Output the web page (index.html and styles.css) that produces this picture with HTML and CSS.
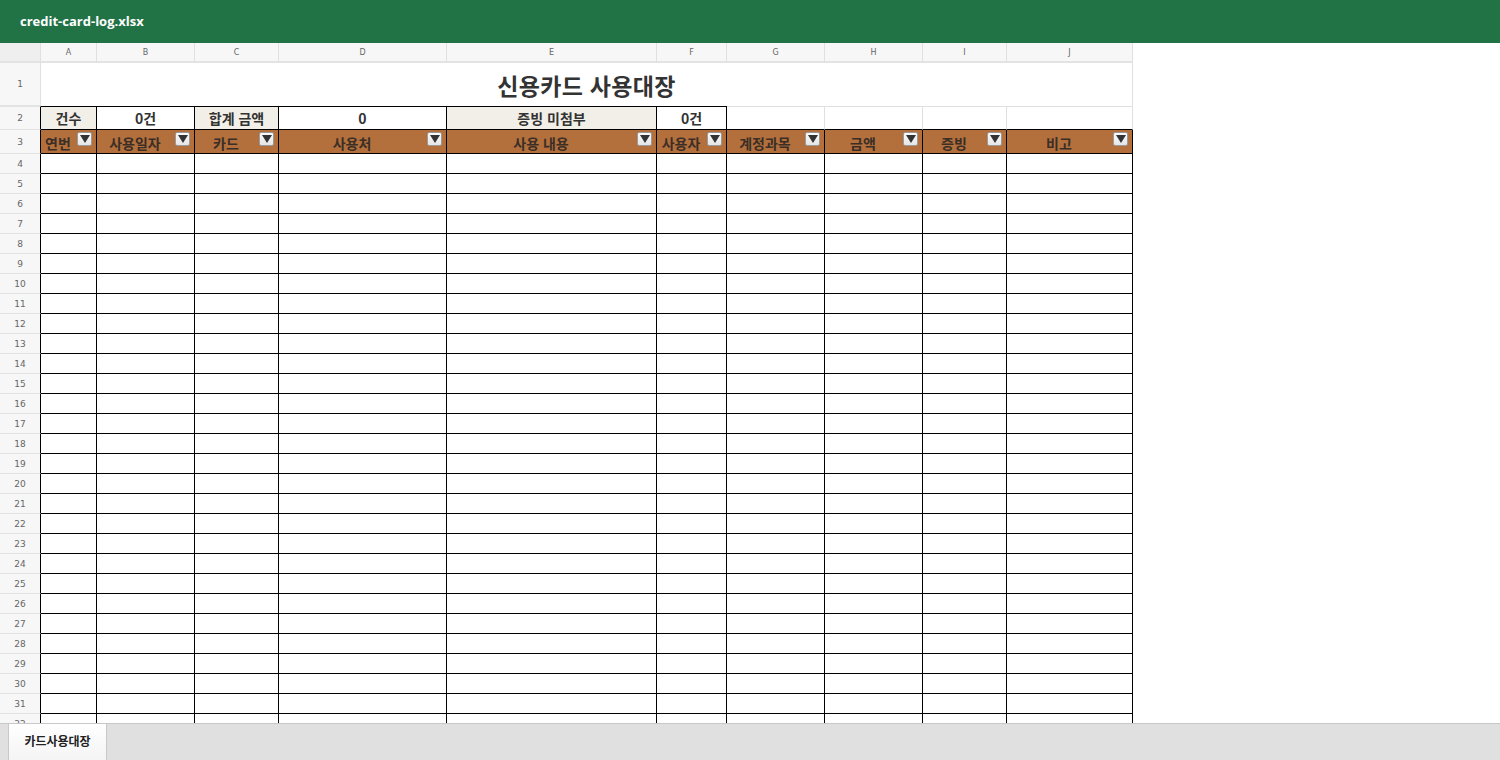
FILE: index.html
```html
<!DOCTYPE html>
<html lang="ko">
<head>
<meta charset="utf-8">
<title>credit-card-log.xlsx</title>
<link rel="stylesheet" href="styles.css">
</head>
<body>
<div class="app">
  <header class="titlebar">credit-card-log.xlsx</header>
  <main class="sheet">
    <table class="grid">
      <colgroup>
        <col class="c-rh"><col class="c-a"><col class="c-b"><col class="c-c"><col class="c-d"><col class="c-e"><col class="c-f"><col class="c-g"><col class="c-h"><col class="c-i"><col class="c-j">
      </colgroup>
      <thead>
        <tr class="r-colhdr">
          <th class="corner"></th><th>A</th><th>B</th><th>C</th><th>D</th><th>E</th><th>F</th><th>G</th><th>H</th><th>I</th><th>J</th>
        </tr>
      </thead>
      <tbody>
        <tr class="r-title">
          <td class="rh">1</td>
          <td class="title" colspan="10">신용카드 사용대장</td>
        </tr>
        <tr class="r-sum">
          <td class="rh rh-edge">2</td>
          <td class="sum lbl">건수</td>
          <td class="sum">0건</td>
          <td class="sum lbl">합계 금액</td>
          <td class="sum">0</td>
          <td class="sum lbl">증빙 미첨부</td>
          <td class="sum">0건</td>
          <td class="plain"></td><td class="plain"></td><td class="plain"></td><td class="plain"></td>
        </tr>
        <tr class="r-head">
          <td class="rh rh-edge">3</td>
          <td class="hd"><div class="fh"><span>연번</span><i class="fb"></i></div></td>
          <td class="hd"><div class="fh"><span>사용일자</span><i class="fb"></i></div></td>
          <td class="hd"><div class="fh"><span>카드</span><i class="fb"></i></div></td>
          <td class="hd"><div class="fh"><span>사용처</span><i class="fb"></i></div></td>
          <td class="hd"><div class="fh"><span>사용 내용</span><i class="fb"></i></div></td>
          <td class="hd"><div class="fh"><span>사용자</span><i class="fb"></i></div></td>
          <td class="hd"><div class="fh"><span>계정과목</span><i class="fb"></i></div></td>
          <td class="hd"><div class="fh"><span>금액</span><i class="fb"></i></div></td>
          <td class="hd"><div class="fh"><span>증빙</span><i class="fb"></i></div></td>
          <td class="hd"><div class="fh"><span>비고</span><i class="fb"></i></div></td>
        </tr>
        <tr class="r"><td class="rh rh-edge">4</td><td></td><td></td><td></td><td></td><td></td><td></td><td></td><td></td><td></td><td></td></tr>
        <tr class="r"><td class="rh rh-edge">5</td><td></td><td></td><td></td><td></td><td></td><td></td><td></td><td></td><td></td><td></td></tr>
        <tr class="r"><td class="rh rh-edge">6</td><td></td><td></td><td></td><td></td><td></td><td></td><td></td><td></td><td></td><td></td></tr>
        <tr class="r"><td class="rh rh-edge">7</td><td></td><td></td><td></td><td></td><td></td><td></td><td></td><td></td><td></td><td></td></tr>
        <tr class="r"><td class="rh rh-edge">8</td><td></td><td></td><td></td><td></td><td></td><td></td><td></td><td></td><td></td><td></td></tr>
        <tr class="r"><td class="rh rh-edge">9</td><td></td><td></td><td></td><td></td><td></td><td></td><td></td><td></td><td></td><td></td></tr>
        <tr class="r"><td class="rh rh-edge">10</td><td></td><td></td><td></td><td></td><td></td><td></td><td></td><td></td><td></td><td></td></tr>
        <tr class="r"><td class="rh rh-edge">11</td><td></td><td></td><td></td><td></td><td></td><td></td><td></td><td></td><td></td><td></td></tr>
        <tr class="r"><td class="rh rh-edge">12</td><td></td><td></td><td></td><td></td><td></td><td></td><td></td><td></td><td></td><td></td></tr>
        <tr class="r"><td class="rh rh-edge">13</td><td></td><td></td><td></td><td></td><td></td><td></td><td></td><td></td><td></td><td></td></tr>
        <tr class="r"><td class="rh rh-edge">14</td><td></td><td></td><td></td><td></td><td></td><td></td><td></td><td></td><td></td><td></td></tr>
        <tr class="r"><td class="rh rh-edge">15</td><td></td><td></td><td></td><td></td><td></td><td></td><td></td><td></td><td></td><td></td></tr>
        <tr class="r"><td class="rh rh-edge">16</td><td></td><td></td><td></td><td></td><td></td><td></td><td></td><td></td><td></td><td></td></tr>
        <tr class="r"><td class="rh rh-edge">17</td><td></td><td></td><td></td><td></td><td></td><td></td><td></td><td></td><td></td><td></td></tr>
        <tr class="r"><td class="rh rh-edge">18</td><td></td><td></td><td></td><td></td><td></td><td></td><td></td><td></td><td></td><td></td></tr>
        <tr class="r"><td class="rh rh-edge">19</td><td></td><td></td><td></td><td></td><td></td><td></td><td></td><td></td><td></td><td></td></tr>
        <tr class="r"><td class="rh rh-edge">20</td><td></td><td></td><td></td><td></td><td></td><td></td><td></td><td></td><td></td><td></td></tr>
        <tr class="r"><td class="rh rh-edge">21</td><td></td><td></td><td></td><td></td><td></td><td></td><td></td><td></td><td></td><td></td></tr>
        <tr class="r"><td class="rh rh-edge">22</td><td></td><td></td><td></td><td></td><td></td><td></td><td></td><td></td><td></td><td></td></tr>
        <tr class="r"><td class="rh rh-edge">23</td><td></td><td></td><td></td><td></td><td></td><td></td><td></td><td></td><td></td><td></td></tr>
        <tr class="r"><td class="rh rh-edge">24</td><td></td><td></td><td></td><td></td><td></td><td></td><td></td><td></td><td></td><td></td></tr>
        <tr class="r"><td class="rh rh-edge">25</td><td></td><td></td><td></td><td></td><td></td><td></td><td></td><td></td><td></td><td></td></tr>
        <tr class="r"><td class="rh rh-edge">26</td><td></td><td></td><td></td><td></td><td></td><td></td><td></td><td></td><td></td><td></td></tr>
        <tr class="r"><td class="rh rh-edge">27</td><td></td><td></td><td></td><td></td><td></td><td></td><td></td><td></td><td></td><td></td></tr>
        <tr class="r"><td class="rh rh-edge">28</td><td></td><td></td><td></td><td></td><td></td><td></td><td></td><td></td><td></td><td></td></tr>
        <tr class="r"><td class="rh rh-edge">29</td><td></td><td></td><td></td><td></td><td></td><td></td><td></td><td></td><td></td><td></td></tr>
        <tr class="r"><td class="rh rh-edge">30</td><td></td><td></td><td></td><td></td><td></td><td></td><td></td><td></td><td></td><td></td></tr>
        <tr class="r"><td class="rh rh-edge">31</td><td></td><td></td><td></td><td></td><td></td><td></td><td></td><td></td><td></td><td></td></tr>
        <tr class="r"><td class="rh rh-edge">32</td><td></td><td></td><td></td><td></td><td></td><td></td><td></td><td></td><td></td><td></td></tr>
      </tbody>
    </table>
  </main>
  <footer class="tabs">
    <div class="tab">카드사용대장</div>
  </footer>
</div>
</body>
</html>
```
FILE: styles.css
```css
* { box-sizing: border-box; }
html, body { margin: 0; padding: 0; }
body {
  width: 1500px;
  height: 760px;
  overflow: hidden;
  background: #fff;
  font-family: "Noto Sans CJK KR", "Noto Sans", sans-serif;
}
.app {
  display: flex;
  flex-direction: column;
  height: 760px;
}
.titlebar {
  flex: none;
  height: 43px;
  background: #217346;
  color: #fff;
  font-family: "Open Sans", "Noto Sans", sans-serif;
  font-weight: 700;
  font-size: 13px;
  line-height: 43px;
  padding-left: 20px;
}
.sheet {
  flex: 1;
  overflow: hidden;
  background: #fff;
}
.grid {
  table-layout: fixed;
  border-collapse: separate;
  border-spacing: 0;
  width: 1133px;
}
.c-rh { width: 41px; }
.c-a { width: 56px; }
.c-b { width: 98px; }
.c-c { width: 84px; }
.c-d { width: 168px; }
.c-e { width: 210px; }
.c-f { width: 70px; }
.c-g { width: 98px; }
.c-h { width: 98px; }
.c-i { width: 84px; }
.c-j { width: 126px; }

.grid th, .grid td {
  padding: 0;
  border-right: 1px solid #000;
  border-bottom: 1px solid #000;
  overflow: hidden;
  white-space: nowrap;
}
.r-colhdr th {
  height: 20px;
  background: #f7f7f7;
  border-right: 1px solid #e0e0e0;
  border-bottom: 2px solid #e3e3e3;
  font-family: "DejaVu Sans", sans-serif;
  font-weight: 400;
  font-size: 8px;
  color: #666;
  text-align: center;
}
.r-colhdr th.corner { background: #efefef; }
.rh {
  background: #f7f7f7;
  border-right: 1px solid #e0e0e0 !important;
  border-bottom: 1px solid #e3e3e3 !important;
  font-family: "DejaVu Sans", sans-serif;
  font-size: 9px;
  color: #666;
  text-align: center;
}
.rh.rh-edge { border-right: 1px solid #000 !important; }
.r-title td { height: 43px; }
.title {
  border-right: 1px solid #e0e0e0 !important;
  border-bottom: none !important;
  text-align: center;
  font-weight: 700;
  font-size: 23px;
  color: #333;
  letter-spacing: 0.3px;
}
.r-sum td {
  height: 24px;
  border-top: 1px solid #000;
}
.r-sum td.rh { border-top: 1px solid #e3e3e3; }
.sum {
  text-align: center;
  font-weight: 700;
  font-size: 14px;
  color: #333;
  background: #fff;
}
.sum.lbl { background: #f2efe8; }
.r-sum td.plain {
  border-top: 1px solid #e0e0e0;
  border-right: 1px solid #e0e0e0;
  border-bottom: 1px solid #000;
}
.r-head td { height: 24px; }
.hd {
  background: #b4703c;
  color: #3a2e26;
  font-weight: 700;
  font-size: 14px;
}
.fh {
  display: flex;
  height: 23px;
}
.fh span {
  flex: 1;
  align-self: center;
  text-align: center;
  line-height: 18px;
  padding-top: 3px;
}
.fb {
  flex: none;
  width: 15px;
  height: 14px;
  margin: 2px 4px 0 2px;
  background: linear-gradient(#fafafa, #e6e6e6);
  border: 1px solid #9a9a9a;
  border-radius: 2px;
  display: flex;
  align-items: center;
  justify-content: center;
}
.fb::after {
  content: "";
  width: 0;
  height: 0;
  border-left: 5px solid transparent;
  border-right: 5px solid transparent;
  border-top: 8px solid #333;
}
.r td { height: 20px; }
.tabs {
  flex: none;
  height: 37px;
  background: #e0e0e0;
  border-top: 1px solid #c8c8c8;
  padding-left: 8px;
  display: flex;
}
.tab {
  width: 99px;
  height: 36px;
  background: linear-gradient(#fff, #f4f4f4);
  border-left: 1px solid #c8c8c8;
  border-right: 1px solid #c8c8c8;
  font-weight: 700;
  font-size: 12px;
  color: #222;
  text-align: center;
  line-height: 34px;
}
```
